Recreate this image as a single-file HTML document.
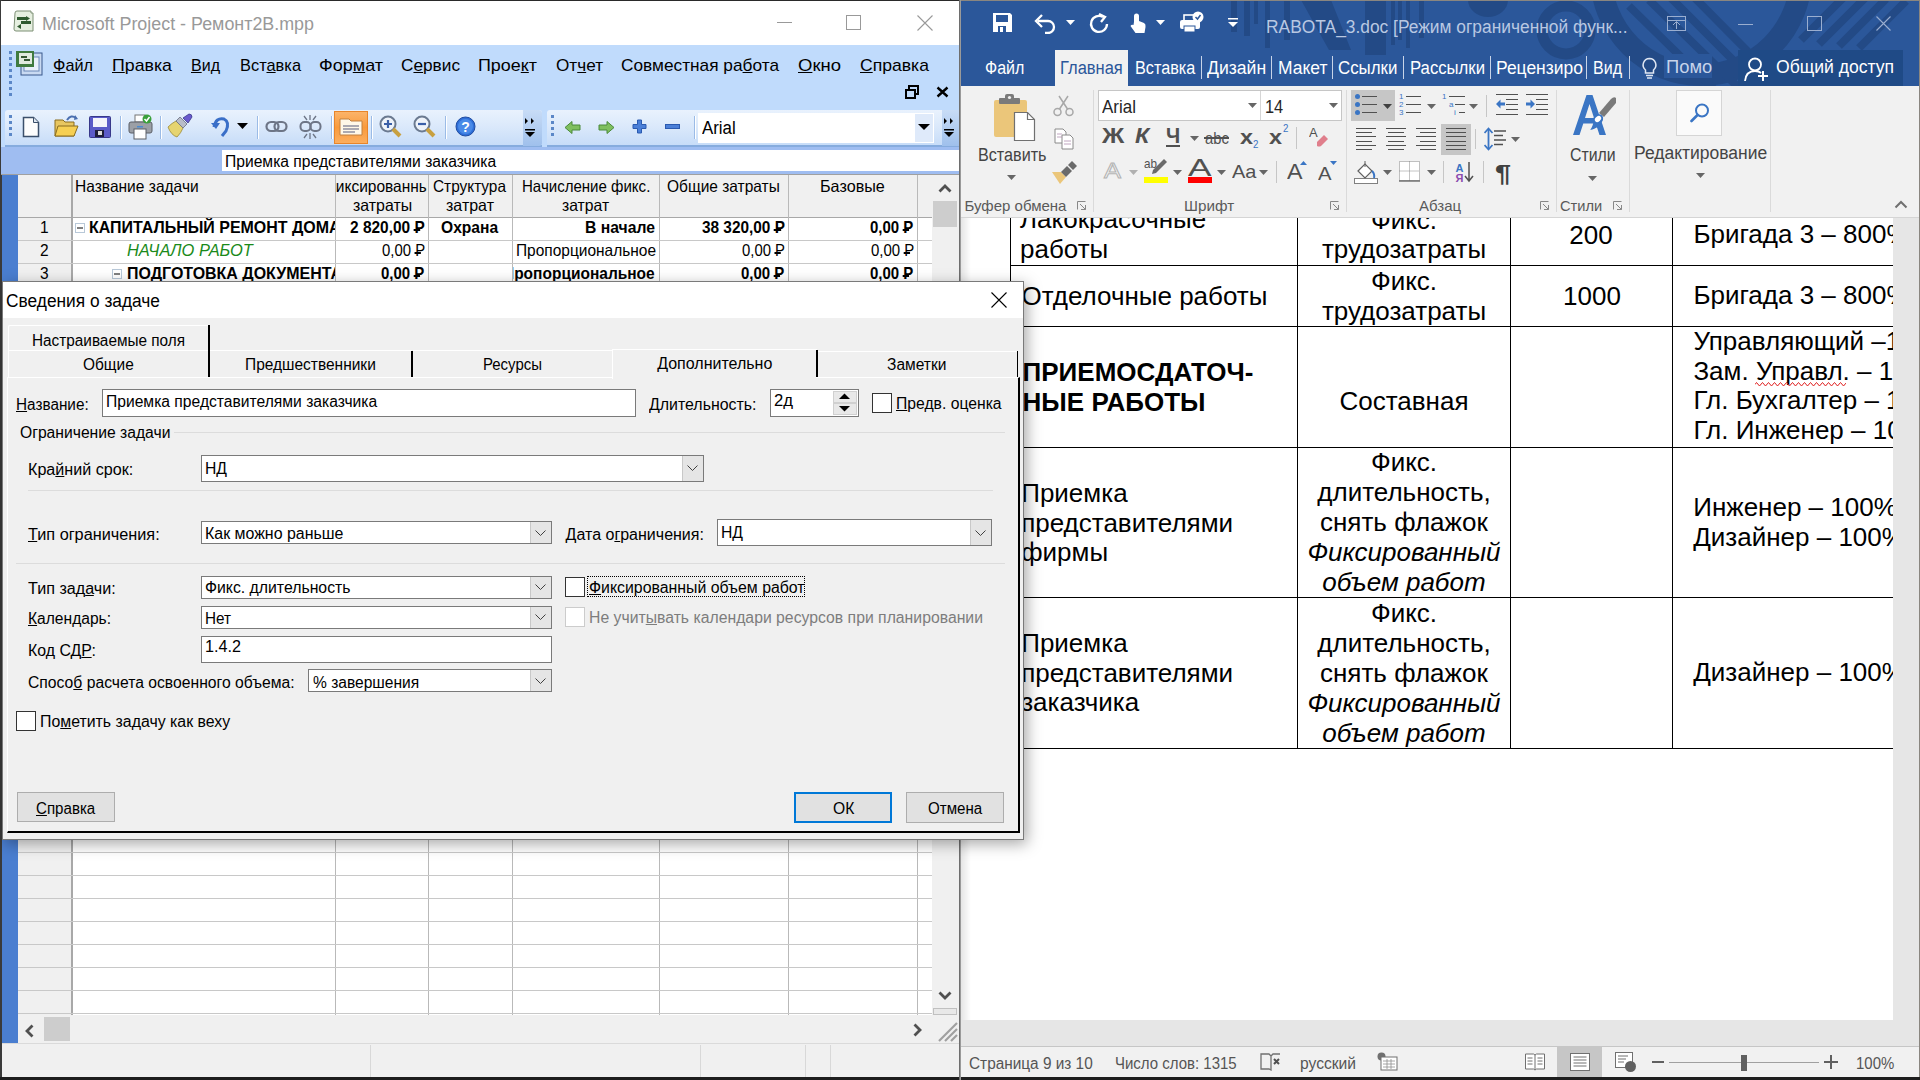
<!DOCTYPE html>
<html><head><meta charset="utf-8"><style>
html,body{margin:0;padding:0;width:1920px;height:1080px;overflow:hidden;background:#1e1e1e;}
body{position:relative;font-family:"Liberation Sans",sans-serif;}
.a{position:absolute;box-sizing:border-box;}
.t{position:absolute;white-space:nowrap;transform-origin:0 0;font-family:"Liberation Sans",sans-serif;}
u{text-decoration:underline;text-underline-offset:1px;text-decoration-thickness:1px;}
.rub{position:relative;display:inline-block;}
.rub::after{content:"";position:absolute;left:-0.06em;width:0.46em;top:0.63em;height:0.08em;background:currentColor;}
</style></head><body>
<div class="a" style="left:0px;top:0px;width:961px;height:1080px;background:#f0f0f0;"></div>
<div class="a" style="left:0px;top:0px;width:1920px;height:1px;background:#2a2a2a;"></div>
<div class="a" style="left:0px;top:0px;width:2px;height:1080px;background:#3a3a3a;"></div>
<div class="a" style="left:1px;top:1px;width:959px;height:44px;background:#fff;"></div>
<svg class="a" style="left:12px;top:9px;" width="24" height="24" viewBox="0 0 24 24"><path d="M3 4 Q3 2 5 2 L19 2 L19 4 L21 4 L21 22 L4 22 Q2 22 2 20 Z" fill="#e6efe0" stroke="#7d8f75" stroke-width="1"/><path d="M5 8 h9 v3 h-9z M9 12 h10 v3 h-10z" fill="#2f5a2f"/><path d="M14 7 l4 2.5 l-4 2.5z M9 15 l-4 2.5 l4 2.5z" fill="#2f5a2f"/></svg>
<div class="t" style="left:42.00px;top:14.76px;font-size:18px;line-height:18px;color:#999;transform:scaleX(0.9932);">Microsoft Project - Ремонт2В.mpp</div>
<div class="a" style="left:777px;top:22px;width:15px;height:1px;background:#999;"></div>
<div class="a" style="left:846px;top:15px;width:15px;height:15px;border:1px solid #999;"></div>
<svg class="a" style="left:917px;top:15px;" width="16" height="16" viewBox="0 0 16 16"><path d="M0.5 0.5 L15.5 15.5 M15.5 0.5 L0.5 15.5" stroke="#999" stroke-width="1.1"/></svg>
<div class="a" style="left:1px;top:45px;width:958px;height:102px;background:#c0dbfc;"></div>
<div class="a" style="left:9px;top:51px;width:3px;height:3px;background:#5b87c7;"></div>
<div class="a" style="left:9px;top:57px;width:3px;height:3px;background:#5b87c7;"></div>
<div class="a" style="left:9px;top:63px;width:3px;height:3px;background:#5b87c7;"></div>
<div class="a" style="left:9px;top:69px;width:3px;height:3px;background:#5b87c7;"></div>
<div class="a" style="left:9px;top:75px;width:3px;height:3px;background:#5b87c7;"></div>
<div class="a" style="left:9px;top:81px;width:3px;height:3px;background:#5b87c7;"></div>
<div class="a" style="left:9px;top:87px;width:3px;height:3px;background:#5b87c7;"></div>
<div class="a" style="left:9px;top:93px;width:3px;height:3px;background:#5b87c7;"></div>
<svg class="a" style="left:15px;top:49px;" width="29" height="29" viewBox="0 0 29 29"><rect x="6" y="4" width="21" height="22" fill="#c9daf2" stroke="#38588c"/><rect x="9" y="8" width="15" height="14" fill="#e8f0fb" stroke="#6a88b8"/><rect x="1" y="2" width="18" height="16" fill="#3f7a3f"/><rect x="4" y="4" width="13" height="11" fill="#dfe9df"/><path d="M6 7h6v2H6z M9 10h6v2H9z" fill="#335533"/></svg>
<div class="t" style="left:53.00px;top:56.61px;font-size:17px;line-height:17px;color:#000;transform:scaleX(0.9575);"><u>Ф</u>айл</div>
<div class="t" style="left:112.00px;top:56.61px;font-size:17px;line-height:17px;color:#000;transform:scaleX(1.0442);"><u>П</u>равка</div>
<div class="t" style="left:191.00px;top:56.61px;font-size:17px;line-height:17px;color:#000;transform:scaleX(0.9425);"><u>В</u>ид</div>
<div class="t" style="left:240.00px;top:56.61px;font-size:17px;line-height:17px;color:#000;transform:scaleX(0.9652);">Вст<u>а</u>вка</div>
<div class="t" style="left:319.00px;top:56.61px;font-size:17px;line-height:17px;color:#000;transform:scaleX(1.0597);">Фор<u>м</u>ат</div>
<div class="t" style="left:401.00px;top:56.61px;font-size:17px;line-height:17px;color:#000;transform:scaleX(1.0133);">С<u>е</u>рвис</div>
<div class="t" style="left:478.00px;top:56.61px;font-size:17px;line-height:17px;color:#000;transform:scaleX(1.0533);">Прое<u>к</u>т</div>
<div class="t" style="left:556.00px;top:56.61px;font-size:17px;line-height:17px;color:#000;transform:scaleX(1.0099);">От<u>ч</u>ет</div>
<div class="t" style="left:621.00px;top:56.61px;font-size:17px;line-height:17px;color:#000;transform:scaleX(1.0155);">Совместная ра<u>б</u>ота</div>
<div class="t" style="left:798.00px;top:56.61px;font-size:17px;line-height:17px;color:#000;transform:scaleX(1.0879);"><u>О</u>кно</div>
<div class="t" style="left:860.00px;top:56.61px;font-size:17px;line-height:17px;color:#000;transform:scaleX(1.0341);"><u>С</u>правка</div>
<svg class="a" style="left:905px;top:85px;" width="14" height="14" viewBox="0 0 14 14"><rect x="4" y="1" width="9" height="8" fill="none" stroke="#000" stroke-width="2"/><rect x="1" y="5" width="9" height="8" fill="#c2dbf9" stroke="#000" stroke-width="2"/></svg>
<svg class="a" style="left:936px;top:86px;" width="13" height="12" viewBox="0 0 13 12"><path d="M1.5 1.5 L11.5 10.5 M11.5 1.5 L1.5 10.5" stroke="#000" stroke-width="2.4"/></svg>
<div class="a" style="left:5px;top:110px;width:537px;height:36px;background:linear-gradient(#e9f2fd,#dbe9fb 45%,#c6dcf8);border-radius:3px;"></div>
<div class="a" style="left:5px;top:145px;width:537px;height:2px;background:#86acde;"></div>
<div class="a" style="left:523px;top:110px;width:19px;height:36px;background:linear-gradient(#c8dcf6,#9fc0ec);border-radius:0 3px 3px 0;"></div>
<div class="a" style="left:547px;top:110px;width:412px;height:36px;background:linear-gradient(#e9f2fd,#dbe9fb 45%,#c6dcf8);border-radius:3px;"></div>
<div class="a" style="left:547px;top:145px;width:412px;height:2px;background:#86acde;"></div>
<div class="a" style="left:942px;top:110px;width:17px;height:36px;background:linear-gradient(#c8dcf6,#9fc0ec);"></div>
<div class="a" style="left:9px;top:115px;width:3px;height:3px;background:#5b87c7;"></div>
<div class="a" style="left:551px;top:115px;width:3px;height:3px;background:#5b87c7;"></div>
<div class="a" style="left:9px;top:121px;width:3px;height:3px;background:#5b87c7;"></div>
<div class="a" style="left:551px;top:121px;width:3px;height:3px;background:#5b87c7;"></div>
<div class="a" style="left:9px;top:127px;width:3px;height:3px;background:#5b87c7;"></div>
<div class="a" style="left:551px;top:127px;width:3px;height:3px;background:#5b87c7;"></div>
<div class="a" style="left:9px;top:133px;width:3px;height:3px;background:#5b87c7;"></div>
<div class="a" style="left:551px;top:133px;width:3px;height:3px;background:#5b87c7;"></div>
<svg class="a" style="left:523px;top:116px;" width="16" height="26" viewBox="0 0 16 26"><path d="M2 2 l3 3 l-3 3z M8 2 l3 3 l-3 3z" fill="#000"/><rect x="2" y="13" width="10" height="1.5" fill="#000"/><path d="M2 16 h10 l-5 5z" fill="#000"/></svg>
<svg class="a" style="left:942px;top:116px;" width="16" height="26" viewBox="0 0 16 26"><path d="M2 2 l3 3 l-3 3z M8 2 l3 3 l-3 3z" fill="#000"/><rect x="2" y="13" width="10" height="1.5" fill="#000"/><path d="M2 16 h10 l-5 5z" fill="#000"/></svg>
<div class="a" style="left:120px;top:116px;width:1px;height:23px;background:#9bbbe6;"></div>
<div class="a" style="left:121px;top:116px;width:1px;height:23px;background:#fff;"></div>
<div class="a" style="left:160px;top:116px;width:1px;height:23px;background:#9bbbe6;"></div>
<div class="a" style="left:161px;top:116px;width:1px;height:23px;background:#fff;"></div>
<div class="a" style="left:257px;top:116px;width:1px;height:23px;background:#9bbbe6;"></div>
<div class="a" style="left:258px;top:116px;width:1px;height:23px;background:#fff;"></div>
<div class="a" style="left:331px;top:116px;width:1px;height:23px;background:#9bbbe6;"></div>
<div class="a" style="left:332px;top:116px;width:1px;height:23px;background:#fff;"></div>
<div class="a" style="left:371px;top:116px;width:1px;height:23px;background:#9bbbe6;"></div>
<div class="a" style="left:372px;top:116px;width:1px;height:23px;background:#fff;"></div>
<div class="a" style="left:445px;top:116px;width:1px;height:23px;background:#9bbbe6;"></div>
<div class="a" style="left:446px;top:116px;width:1px;height:23px;background:#fff;"></div>
<div class="a" style="left:694px;top:116px;width:1px;height:23px;background:#9bbbe6;"></div>
<div class="a" style="left:695px;top:116px;width:1px;height:23px;background:#fff;"></div>
<svg class="a" style="left:22px;top:116px;" width="18" height="22" viewBox="0 0 18 22"><path d="M1.5 1.5 h10 l5 5 v14 h-15z" fill="#fdfdfd" stroke="#3b4f6b" stroke-width="1.5"/><path d="M11.5 1.5 v5 h5" fill="#dde6f0" stroke="#3b4f6b" stroke-width="1"/></svg>
<svg class="a" style="left:54px;top:114px;" width="26" height="24" viewBox="0 0 26 24"><path d="M1 6 h8 l2 2 h9 v14 h-19z" fill="#e8c660" stroke="#8a6d1f"/><path d="M4 12 h20 l-4 10 h-19z" fill="#f6cf52" stroke="#8a6d1f"/><path d="M13 6 q4 -6 9 -2" fill="none" stroke="#4a6fb0" stroke-width="2"/><path d="M21 1 l3 4 l-4 1z" fill="#4a6fb0"/></svg>
<svg class="a" style="left:89px;top:116px;" width="22" height="22" viewBox="0 0 22 22"><rect x="0.5" y="0.5" width="21" height="21" rx="1" fill="#5b5bc8" stroke="#38388a"/><rect x="4" y="2" width="14" height="9" fill="#f4f4fb"/><rect x="6" y="14" width="9" height="7" fill="#1e1e3a"/><rect x="9" y="15" width="4" height="4" fill="#dcdcdc"/></svg>
<svg class="a" style="left:128px;top:114px;" width="25" height="26" viewBox="0 0 25 26"><rect x="7" y="1" width="10" height="7" fill="#fff" stroke="#777"/><rect x="1" y="8" width="23" height="11" rx="2" fill="#9b9fa6" stroke="#5b5f66"/><rect x="6" y="15" width="12" height="10" fill="#fff" stroke="#5b5f66"/><rect x="9" y="12" width="6" height="1.5" fill="#4a8ad0"/><circle cx="19" cy="5" r="4.5" fill="#3aa03a"/><path d="M16.5 5 l2 2 l3 -4" stroke="#fff" fill="none" stroke-width="1.5"/></svg>
<svg class="a" style="left:166px;top:113px;" width="28" height="26" viewBox="0 0 28 26"><path d="M2 14 q4 -4 8 -6 l7 7 q-2 5 -6 9 q-6 -2 -9 -10z" fill="#e6d470" stroke="#9a8a3a" stroke-width="0.8"/><path d="M10 8 l4 -4 l7 7 l-4 4z" fill="#b8bcc8" stroke="#6a6f80" stroke-width="0.8"/><path d="M17 5 l6 -4 q3 0 3 3 l-4 6z" fill="#6a5acd" stroke="#3a3a8a" stroke-width="0.8"/></svg>
<svg class="a" style="left:210px;top:115px;" width="22" height="22" viewBox="0 0 22 22"><path d="M4 12 q2 -10 10 -8 q6 3 2 12 l-4 5" fill="none" stroke="#3a6fc8" stroke-width="3"/><path d="M1 8 l5 6 l4 -6z" fill="#3a6fc8"/></svg>
<svg class="a" style="left:237px;top:123px;" width="11" height="7" viewBox="0 0 11 7"><path d="M0 0 h11 l-5.5 6z" fill="#000"/></svg>
<svg class="a" style="left:265px;top:120px;" width="23" height="13" viewBox="0 0 23 13"><rect x="1.5" y="2" width="12" height="9" rx="4.5" fill="none" stroke="#6d7586" stroke-width="2.2"/><rect x="9.5" y="2" width="12" height="9" rx="4.5" fill="none" stroke="#6d7586" stroke-width="2.2"/></svg>
<svg class="a" style="left:299px;top:115px;" width="23" height="24" viewBox="0 0 23 24"><rect x="1.5" y="7" width="10" height="9" rx="4" fill="none" stroke="#6d7586" stroke-width="2"/><rect x="11.5" y="7" width="10" height="9" rx="4" fill="none" stroke="#6d7586" stroke-width="2"/><path d="M11 0 v5 M11 18 v6 M5 1 l3 4 M17 1 l-3 4 M5 23 l3 -4 M17 23 l-3 -4" stroke="#6d7586" stroke-width="1.3"/></svg>
<div class="a" style="left:334px;top:111px;width:34px;height:33px;background:linear-gradient(#fbb46a,#f99a3c 50%,#fcae5e);border:1px solid #e8852a;"></div>
<svg class="a" style="left:339px;top:116px;" width="24" height="20" viewBox="0 0 24 20"><path d="M1 3 h9 l2 2 h11 v14 h-22z" fill="#fff8e8" stroke="#c08040"/><path d="M4 10 h16 M4 13 h16 M4 16 h12" stroke="#9090a0" stroke-width="1.3"/></svg>
<svg class="a" style="left:379px;top:115px;" width="23" height="23" viewBox="0 0 23 23"><circle cx="9" cy="9" r="7.5" fill="#eef3fa" stroke="#6b7a90" stroke-width="2"/><path d="M14 14 l7 7" stroke="#c8a040" stroke-width="4"/><path d="M5 9 h8 M9 5 v8" stroke="#3a5fa8" stroke-width="2.2"/></svg>
<svg class="a" style="left:413px;top:115px;" width="23" height="23" viewBox="0 0 23 23"><circle cx="9" cy="9" r="7.5" fill="#eef3fa" stroke="#6b7a90" stroke-width="2"/><path d="M14 14 l7 7" stroke="#c8a040" stroke-width="4"/><path d="M5 9 h8" stroke="#3a5fa8" stroke-width="2.2"/></svg>
<svg class="a" style="left:455px;top:116px;" width="21" height="21" viewBox="0 0 21 21"><circle cx="10.5" cy="10.5" r="9.5" fill="#2f6fd8" stroke="#1d4aa0"/><circle cx="10.5" cy="10.5" r="7.5" fill="#4a8ae8"/><text x="10.5" y="15.5" font-size="14" font-weight="bold" text-anchor="middle" fill="#fff" font-family="Liberation Sans">?</text></svg>
<svg class="a" style="left:564px;top:121px;" width="17" height="13" viewBox="0 0 17 13"><path d="M1 6.5 l7 -6 v3.5 h8 v5 h-8 v3.5z" fill="#7fbf5f" stroke="#4a8a3a"/></svg>
<svg class="a" style="left:598px;top:121px;" width="17" height="13" viewBox="0 0 17 13"><path d="M16 6.5 l-7 -6 v3.5 h-8 v5 h8 v3.5z" fill="#7fbf5f" stroke="#4a8a3a"/></svg>
<svg class="a" style="left:632px;top:119px;" width="15" height="15" viewBox="0 0 15 15"><path d="M5.5 1 h4 v4.5 h4.5 v4 h-4.5 v4.5 h-4 v-4.5 h-4.5 v-4 h4.5z" fill="#4a7fd8" stroke="#2a5ab0"/></svg>
<svg class="a" style="left:665px;top:124px;" width="15" height="5" viewBox="0 0 15 5"><rect x="0.5" y="0.5" width="14" height="4" fill="#4a7fd8" stroke="#2a5ab0"/></svg>
<div class="a" style="left:698px;top:113px;width:236px;height:30px;background:#fff;"></div>
<div class="a" style="left:915px;top:114px;width:18px;height:28px;background:#dfeafa;"></div>
<svg class="a" style="left:918px;top:124px;" width="12" height="7" viewBox="0 0 12 7"><path d="M0 0 h12 l-6 6z" fill="#000"/></svg>
<div class="t" style="left:702.00px;top:118.76px;font-size:18px;line-height:18px;color:#000;transform:scaleX(0.9361);">Arial</div>
<div class="a" style="left:1px;top:147px;width:958px;height:28px;background:#9fbdf1;"></div>
<div class="a" style="left:222px;top:150px;width:737px;height:21px;background:#fff;"></div>
<div class="t" style="left:224.70px;top:153.75px;font-size:16px;line-height:16px;color:#000;transform:scaleX(0.9775);">Приемка представителями заказчика</div>
<div class="a" style="left:1px;top:174px;width:958px;height:1px;background:#a0a0a0;"></div>
<div class="a" style="left:2px;top:175px;width:16px;height:868px;background:#4a7ed0;"></div>
<div class="a" style="left:18px;top:175px;width:941px;height:42px;background:#f0f0f0;"></div>
<div class="a" style="left:18px;top:217px;width:914px;height:1px;background:#a8a8a8;"></div>
<div class="a" style="left:72px;top:218px;width:860px;height:797px;background:#fff;"></div>
<div class="a" style="left:18px;top:218px;width:54px;height:797px;background:#f0f0f0;"></div>
<div class="a" style="left:71px;top:175px;width:2px;height:840px;background:#a8a8a8;"></div>
<div class="a" style="left:335px;top:175px;width:1px;height:840px;background:#b9b9b9;"></div>
<div class="a" style="left:428px;top:175px;width:1px;height:840px;background:#b9b9b9;"></div>
<div class="a" style="left:512px;top:175px;width:1px;height:840px;background:#b9b9b9;"></div>
<div class="a" style="left:659px;top:175px;width:1px;height:840px;background:#b9b9b9;"></div>
<div class="a" style="left:788px;top:175px;width:1px;height:840px;background:#b9b9b9;"></div>
<div class="a" style="left:917px;top:175px;width:1px;height:840px;background:#b9b9b9;"></div>
<div class="a" style="left:18px;top:240px;width:914px;height:1px;background:#c8c8c8;"></div>
<div class="a" style="left:18px;top:263px;width:914px;height:1px;background:#c8c8c8;"></div>
<div class="a" style="left:18px;top:852px;width:914px;height:1px;background:#c8c8c8;"></div>
<div class="a" style="left:18px;top:875px;width:914px;height:1px;background:#c8c8c8;"></div>
<div class="a" style="left:18px;top:898px;width:914px;height:1px;background:#c8c8c8;"></div>
<div class="a" style="left:18px;top:921px;width:914px;height:1px;background:#c8c8c8;"></div>
<div class="a" style="left:18px;top:944px;width:914px;height:1px;background:#c8c8c8;"></div>
<div class="a" style="left:18px;top:967px;width:914px;height:1px;background:#c8c8c8;"></div>
<div class="a" style="left:18px;top:990px;width:914px;height:1px;background:#c8c8c8;"></div>
<div class="a" style="left:18px;top:1013px;width:914px;height:1px;background:#c8c8c8;"></div>
<div class="t" style="left:74.50px;top:178.03px;font-size:16.5px;line-height:16.5px;transform:scaleX(0.9418);">Название задачи</div>
<div class="a" style="left:0;top:0;width:1920px;height:1080px;clip-path:inset(175px 1493px 863px 336px);">
<div class="t" style="left:324.49px;top:178.03px;font-size:16.5px;line-height:16.5px;transform:scaleX(0.9394);">Фиксированные</div>
</div>
<div class="t" style="left:352.50px;top:197.03px;font-size:16.5px;line-height:16.5px;transform:scaleX(0.9651);">затраты</div>
<div class="t" style="left:433.30px;top:178.03px;font-size:16.5px;line-height:16.5px;transform:scaleX(0.9324);">Структура</div>
<div class="t" style="left:446.30px;top:197.03px;font-size:16.5px;line-height:16.5px;transform:scaleX(0.9697);">затрат</div>
<div class="t" style="left:521.50px;top:178.03px;font-size:16.5px;line-height:16.5px;transform:scaleX(0.9118);">Начисление фикс.</div>
<div class="t" style="left:562.40px;top:197.03px;font-size:16.5px;line-height:16.5px;transform:scaleX(0.9535);">затрат</div>
<div class="t" style="left:667.20px;top:178.03px;font-size:16.5px;line-height:16.5px;transform:scaleX(0.9384);">Общие затраты</div>
<div class="t" style="left:820.20px;top:178.03px;font-size:16.5px;line-height:16.5px;transform:scaleX(0.9794);">Базовые</div>
<div class="t" style="left:40.30px;top:219.03px;font-size:16.5px;line-height:16.5px;transform:scaleX(0.9394);">1</div>
<div class="t" style="left:40.30px;top:242.03px;font-size:16.5px;line-height:16.5px;transform:scaleX(0.9394);">2</div>
<div class="t" style="left:40.30px;top:265.03px;font-size:16.5px;line-height:16.5px;transform:scaleX(0.9394);">3</div>
<svg class="a" style="left:75px;top:223px;" width="10" height="10" viewBox="0 0 10 10"><rect x="0.5" y="0.5" width="9" height="9" fill="#fff" stroke="#b8c8d8"/><path d="M2 5 h6" stroke="#000" stroke-width="1"/></svg>
<svg class="a" style="left:112px;top:269px;" width="10" height="10" viewBox="0 0 10 10"><rect x="0.5" y="0.5" width="9" height="9" fill="#fff" stroke="#b8c8d8"/><path d="M2 5 h6" stroke="#000" stroke-width="1"/></svg>
<div class="a" style="left:0;top:0;width:1920px;height:1080px;clip-path:inset(218px 1585px 792px 72px);">
<div class="t" style="left:89.40px;top:219.03px;font-size:16.5px;line-height:16.5px;font-weight:bold;transform:scaleX(0.9676);">КАПИТАЛЬНЫЙ РЕМОНТ ДОМА</div>
<div class="t" style="left:126.50px;top:242.03px;font-size:16.5px;line-height:16.5px;color:#1a8a1a;font-style:italic;transform:scaleX(0.9953);">НАЧАЛО РАБОТ</div>
<div class="t" style="left:126.90px;top:265.03px;font-size:16.5px;line-height:16.5px;font-weight:bold;transform:scaleX(0.9676);">ПОДГОТОВКА ДОКУМЕНТАЦИИ</div>
</div>
<div class="t" style="left:350.00px;top:219.03px;font-size:16.5px;line-height:16.5px;font-weight:bold;transform:scaleX(0.9359);">2 820,00 <span class="rub">Р</span></div>
<div class="t" style="left:440.80px;top:219.03px;font-size:16.5px;line-height:16.5px;font-weight:bold;transform:scaleX(0.9452);">Охрана</div>
<div class="t" style="left:585.00px;top:219.03px;font-size:16.5px;line-height:16.5px;font-weight:bold;transform:scaleX(0.9534);">В начале</div>
<div class="t" style="left:701.70px;top:219.03px;font-size:16.5px;line-height:16.5px;font-weight:bold;transform:scaleX(0.9313);">38 320,00 <span class="rub">Р</span></div>
<div class="t" style="left:870.20px;top:219.03px;font-size:16.5px;line-height:16.5px;font-weight:bold;transform:scaleX(0.9080);">0,00 <span class="rub">Р</span></div>
<div class="t" style="left:382.30px;top:242.03px;font-size:16.5px;line-height:16.5px;transform:scaleX(0.9038);">0,00 <span class="rub">Р</span></div>
<div class="t" style="left:516.30px;top:242.03px;font-size:16.5px;line-height:16.5px;transform:scaleX(0.9376);">Пропорциональное</div>
<div class="t" style="left:742.40px;top:242.03px;font-size:16.5px;line-height:16.5px;transform:scaleX(0.9018);">0,00 <span class="rub">Р</span></div>
<div class="t" style="left:871.00px;top:242.03px;font-size:16.5px;line-height:16.5px;transform:scaleX(0.9080);">0,00 <span class="rub">Р</span></div>
<div class="t" style="left:381.40px;top:265.03px;font-size:16.5px;line-height:16.5px;font-weight:bold;transform:scaleX(0.9080);">0,00 <span class="rub">Р</span></div>
<div class="a" style="left:0;top:0;width:1920px;height:1080px;clip-path:inset(263px 1261px 792px 513px);">
<div class="t" style="left:503.29px;top:265.03px;font-size:16.5px;line-height:16.5px;font-weight:bold;transform:scaleX(0.9394);">Пропорциональное</div>
</div>
<div class="t" style="left:741.30px;top:265.03px;font-size:16.5px;line-height:16.5px;font-weight:bold;transform:scaleX(0.9080);">0,00 <span class="rub">Р</span></div>
<div class="t" style="left:870.20px;top:265.03px;font-size:16.5px;line-height:16.5px;font-weight:bold;transform:scaleX(0.9080);">0,00 <span class="rub">Р</span></div>
<div class="a" style="left:932px;top:175px;width:27px;height:840px;background:#f0f0f0;"></div>
<div class="a" style="left:933px;top:201px;width:24px;height:26px;background:#cdcdcd;"></div>
<svg class="a" style="left:938px;top:184px;" width="14" height="9" viewBox="0 0 14 9"><path d="M1.5 7.5 L7 2 L12.5 7.5" fill="none" stroke="#505050" stroke-width="2.8"/></svg>
<svg class="a" style="left:938px;top:991px;" width="14" height="9" viewBox="0 0 14 9"><path d="M1.5 1.5 L7 7 L12.5 1.5" fill="none" stroke="#505050" stroke-width="2.8"/></svg>
<div class="a" style="left:933px;top:1008px;width:24px;height:7px;background:#e8e8e8;border:1px solid #c0c0c0;"></div>
<div class="a" style="left:18px;top:1015px;width:941px;height:28px;background:#f0f0f0;"></div>
<div class="a" style="left:44px;top:1017px;width:26px;height:24px;background:#cdcdcd;"></div>
<svg class="a" style="left:25px;top:1024px;" width="9" height="14" viewBox="0 0 9 14"><path d="M7.5 1.5 L2 7 L7.5 12.5" fill="none" stroke="#505050" stroke-width="2.8"/></svg>
<svg class="a" style="left:913px;top:1023px;" width="9" height="14" viewBox="0 0 9 14"><path d="M1.5 1.5 L7 7 L1.5 12.5" fill="none" stroke="#505050" stroke-width="2.8"/></svg>
<svg class="a" style="left:938px;top:1022px;" width="20" height="20" viewBox="0 0 20 20"><path d="M19 1 L1 19 M19 7 L7 19 M19 13 L13 19" stroke="#a0a0a0" stroke-width="2.2"/></svg>
<div class="a" style="left:955px;top:1066px;width:2px;height:2px;background:#b8b8b8;"></div>
<div class="a" style="left:951px;top:1070px;width:2px;height:2px;background:#b8b8b8;"></div>
<div class="a" style="left:955px;top:1070px;width:2px;height:2px;background:#b8b8b8;"></div>
<div class="a" style="left:947px;top:1074px;width:2px;height:2px;background:#b8b8b8;"></div>
<div class="a" style="left:951px;top:1074px;width:2px;height:2px;background:#b8b8b8;"></div>
<div class="a" style="left:955px;top:1074px;width:2px;height:2px;background:#b8b8b8;"></div>
<div class="a" style="left:2px;top:1043px;width:957px;height:35px;background:#f0f0f0;border-top:1px solid #dadada;"></div>
<div class="a" style="left:370px;top:1045px;width:1px;height:32px;background:#d8d8d8;"></div>
<div class="a" style="left:700px;top:1045px;width:1px;height:32px;background:#d8d8d8;"></div>
<div class="a" style="left:805px;top:1045px;width:1px;height:32px;background:#d8d8d8;"></div>
<div class="a" style="left:830px;top:1045px;width:1px;height:32px;background:#d8d8d8;"></div>
<div class="a" style="left:0px;top:1077px;width:961px;height:3px;background:#1e1e1e;"></div>
<div class="a" style="left:959px;top:0px;width:2px;height:1080px;background:#6e6e6e;"></div>
<div class="a" style="left:960px;top:0px;width:960px;height:86px;background:#2b579a;"></div>
<div class="a" style="left:960px;top:0px;width:1px;height:1080px;background:#9a9a9a;"></div>
<svg class="a" style="left:961px;top:0px;" width="957" height="86" viewBox="0 0 957 86">
      <g fill="#234a86">
        <rect x="270" y="0" width="6" height="32"/><rect x="283" y="0" width="6" height="36"/><rect x="293" y="0" width="4" height="24"/>
        <rect x="304" y="0" width="5" height="48"/><rect x="323" y="0" width="6" height="40"/>
        <path d="M340 0 h30 l20 50 h-22z"/>
        <rect x="404" y="0" width="21" height="55"/><rect x="430" y="0" width="4" height="45"/><rect x="437" y="0" width="4" height="40"/><rect x="445" y="0" width="4" height="48"/><rect x="458" y="0" width="5" height="38"/>
        <path d="M507 0 h40 a20 17 0 0 1 -40 0z"/>
      </g>
      <circle cx="605" cy="30" r="24" fill="none" stroke="#234a86" stroke-width="11"/>
      <circle cx="740" cy="-25" r="100" fill="none" stroke="#234a86" stroke-width="22"/>
      <g stroke="#234a86" stroke-width="8">
        <path d="M668 6 L760 96 M688 0 L782 92 M706 -6 L800 88 M724 -12 L815 80"/>
        <path d="M840 40 L885 -5 M858 44 L905 -3 M878 46 L925 -1 M898 48 L945 1"/>
      </g>
    </svg>
<svg class="a" style="left:992px;top:12px;" width="21" height="21" viewBox="0 0 21 21"><path d="M1 1 h17 l2 2 v17 h-19z" fill="#fff"/><rect x="4" y="3" width="12" height="7" fill="#2b579a"/><rect x="6" y="14" width="8" height="6" fill="#2b579a"/><rect x="8" y="15" width="3" height="5" fill="#fff"/></svg>
<svg class="a" style="left:1034px;top:13px;" width="24" height="21" viewBox="0 0 24 21"><path d="M4 8 h10 a6 6 0 0 1 0 12 h-3" fill="none" stroke="#fff" stroke-width="2.3"/><path d="M8 2 l-6 6 l6 6" fill="none" stroke="#fff" stroke-width="2.3"/></svg>
<svg class="a" style="left:1066px;top:20px;" width="9" height="5" viewBox="0 0 9 5"><path d="M0 0 h9 l-4.5 5z" fill="#fff"/></svg>
<svg class="a" style="left:1088px;top:13px;" width="22" height="21" viewBox="0 0 22 21"><path d="M15 4 a8 8 0 1 0 4 7" fill="none" stroke="#fff" stroke-width="2.3"/><path d="M11 1 l6 3 l-4 5" fill="none" stroke="#fff" stroke-width="2.3"/></svg>
<svg class="a" style="left:1128px;top:12px;" width="19" height="22" viewBox="0 0 19 22"><path d="M6 10 v-6 a2.5 2.5 0 0 1 5 0 v5 l5 2 q2 1 1.5 4 l-1 6 h-9 l-5 -7 q1 -2 3 -1z" fill="#fff"/></svg>
<svg class="a" style="left:1156px;top:20px;" width="9" height="5" viewBox="0 0 9 5"><path d="M0 0 h9 l-4.5 5z" fill="#fff"/></svg>
<svg class="a" style="left:1179px;top:11px;" width="25" height="22" viewBox="0 0 25 22"><rect x="5" y="4" width="11" height="6" fill="none" stroke="#fff" stroke-width="1.6"/><rect x="1" y="9" width="20" height="9" rx="2" fill="#fff"/><rect x="5" y="15" width="11" height="6" fill="#fff" stroke="#2b579a"/><circle cx="19" cy="6" r="5.5" fill="#fff"/><path d="M16.5 6 l2 2 l3 -4" stroke="#2b579a" fill="none" stroke-width="1.5"/></svg>
<svg class="a" style="left:1228px;top:18px;" width="10" height="9" viewBox="0 0 10 9"><rect x="0" y="0" width="10" height="1.5" fill="#fff"/><path d="M0 4 h10 l-5 5z" fill="#fff"/></svg>
<div class="t" style="left:1266.00px;top:17.56px;font-size:18px;line-height:18px;color:#b9c8e2;transform:scaleX(0.9651);">RABOTA_3.doc [Режим ограниченной функ...</div>
<svg class="a" style="left:1667px;top:16px;" width="19" height="15" viewBox="0 0 19 15"><rect x="0.5" y="0.5" width="18" height="14" fill="none" stroke="#9aaed0"/><path d="M0.5 4.5 h18" stroke="#9aaed0"/><path d="M9.5 13 v-7 M6 9 l3.5 -3.5 l3.5 3.5" fill="none" stroke="#9aaed0"/></svg>
<div class="a" style="left:1738px;top:24px;width:15px;height:1px;background:#9aaed0;"></div>
<div class="a" style="left:1807px;top:16px;width:15px;height:15px;border:1px solid #9aaed0;"></div>
<svg class="a" style="left:1876px;top:16px;" width="15" height="15" viewBox="0 0 15 15"><path d="M0.5 0.5 L14.5 14.5 M14.5 0.5 L0.5 14.5" stroke="#9aaed0" stroke-width="1.1"/></svg>
<div class="a" style="left:1055px;top:50px;width:73px;height:36px;background:#f1f1f1;"></div>
<div class="t" style="left:984.70px;top:58.96px;font-size:18px;line-height:18px;color:#fff;transform:scaleX(0.8884);">Файл</div>
<div class="t" style="left:1059.70px;top:58.96px;font-size:18px;line-height:18px;color:#2b579a;transform:scaleX(0.9163);">Главная</div>
<div class="t" style="left:1134.70px;top:58.96px;font-size:18px;line-height:18px;color:#fff;transform:scaleX(0.9011);">Вставка</div>
<div class="t" style="left:1206.70px;top:58.96px;font-size:18px;line-height:18px;color:#fff;transform:scaleX(0.9765);">Дизайн</div>
<div class="t" style="left:1277.50px;top:58.96px;font-size:18px;line-height:18px;color:#fff;transform:scaleX(0.9698);">Макет</div>
<div class="t" style="left:1337.80px;top:58.96px;font-size:18px;line-height:18px;color:#fff;transform:scaleX(0.9375);">Ссылки</div>
<div class="t" style="left:1409.70px;top:58.96px;font-size:18px;line-height:18px;color:#fff;transform:scaleX(0.9285);">Рассылки</div>
<div class="t" style="left:1495.60px;top:58.96px;font-size:18px;line-height:18px;color:#fff;transform:scaleX(0.9699);">Рецензиро</div>
<div class="t" style="left:1593.00px;top:58.96px;font-size:18px;line-height:18px;color:#fff;transform:scaleX(0.8901);">Вид</div>
<div class="a" style="left:1201px;top:56px;width:1px;height:23px;background:#c8d4e8;"></div>
<div class="a" style="left:1271px;top:56px;width:1px;height:23px;background:#c8d4e8;"></div>
<div class="a" style="left:1332px;top:56px;width:1px;height:23px;background:#c8d4e8;"></div>
<div class="a" style="left:1403px;top:56px;width:1px;height:23px;background:#c8d4e8;"></div>
<div class="a" style="left:1490px;top:56px;width:1px;height:23px;background:#c8d4e8;"></div>
<div class="a" style="left:1586px;top:56px;width:1px;height:23px;background:#c8d4e8;"></div>
<div class="a" style="left:1629px;top:56px;width:1px;height:23px;background:#c8d4e8;"></div>
<div class="a" style="left:1664px;top:54px;width:48px;height:24px;background:#2b579a;"></div>
<svg class="a" style="left:1641px;top:57px;" width="17" height="22" viewBox="0 0 17 22"><path d="M8.5 1.5 a6.5 6.5 0 0 1 4 11.5 v3 h-8 v-3 a6.5 6.5 0 0 1 4 -11.5z" fill="none" stroke="#dfe6f2" stroke-width="1.5"/><path d="M5 18.5 h7 M6 21 h5" stroke="#dfe6f2" stroke-width="1.5"/></svg>
<div class="t" style="left:1665.80px;top:58.06px;font-size:18px;line-height:18px;color:#c6d3ea;transform:scaleX(1.0195);">Помо</div>
<div class="a" style="left:1738px;top:50px;width:165px;height:36px;background:#1f4a86;"></div>
<svg class="a" style="left:1744px;top:57px;" width="26" height="25" viewBox="0 0 26 25"><circle cx="11" cy="7.5" r="6" fill="none" stroke="#fff" stroke-width="1.8"/><path d="M1 24 q1 -10 10 -10 q4 0 6 2" fill="none" stroke="#fff" stroke-width="1.8"/><path d="M19 14 v10 M14 19 h10" stroke="#fff" stroke-width="2"/></svg>
<div class="t" style="left:1776.40px;top:58.06px;font-size:18px;line-height:18px;color:#fff;transform:scaleX(0.9764);">Общий доступ</div>
<div class="a" style="left:961px;top:86px;width:959px;height:131px;background:#f1f1f1;"></div>
<div class="a" style="left:961px;top:217px;width:959px;height:1px;background:#d5d5d5;"></div>
<div class="a" style="left:1093px;top:90px;width:1px;height:122px;background:#dadada;"></div>
<div class="a" style="left:1346px;top:90px;width:1px;height:122px;background:#dadada;"></div>
<div class="a" style="left:1556px;top:90px;width:1px;height:122px;background:#dadada;"></div>
<div class="a" style="left:1629px;top:90px;width:1px;height:122px;background:#dadada;"></div>
<div class="a" style="left:1770px;top:90px;width:1px;height:122px;background:#dadada;"></div>
<svg class="a" style="left:993px;top:94px;" width="44" height="48" viewBox="0 0 44 48"><rect x="1" y="6" width="33" height="37" rx="2" fill="#ebc67a"/><rect x="6" y="4" width="21" height="6" rx="1" fill="#7a7a7a"/><path d="M12 4 v-2 a2 2 0 0 1 2 -2 h5 a2 2 0 0 1 2 2 v2z" fill="#7a7a7a"/><circle cx="16.5" cy="3.5" r="1.6" fill="#f1f1f1"/><path d="M21.5 18.5 h13 l7 7 v21 h-20z" fill="#fff" stroke="#707070" stroke-width="1.2"/><path d="M34.5 18.5 v7 h7" fill="none" stroke="#707070" stroke-width="1.2"/></svg>
<div class="t" style="left:977.50px;top:145.76px;font-size:18px;line-height:18px;color:#444;transform:scaleX(0.8975);">Вставить</div>
<svg class="a" style="left:1007px;top:175px;" width="9" height="5" viewBox="0 0 9 5"><path d="M0 0 h9 l-4.5 5z" fill="#666"/></svg>
<svg class="a" style="left:1053px;top:95px;" width="21" height="22" viewBox="0 0 21 22"><circle cx="4.5" cy="17" r="3.5" fill="none" stroke="#a8a8a8" stroke-width="1.5"/><circle cx="16.5" cy="17" r="3.5" fill="none" stroke="#a8a8a8" stroke-width="1.5"/><path d="M6.5 14 L15 1 M14.5 14 L6 1" stroke="#a8a8a8" stroke-width="1.5"/></svg>
<svg class="a" style="left:1054px;top:128px;" width="21" height="22" viewBox="0 0 21 22"><path d="M1 1 h8 l3 3 v11 h-11z" fill="#fff" stroke="#8a8a8a"/><path d="M8 7 h8 l3 3 v11 h-11z" fill="#fff" stroke="#8a8a8a"/><path d="M3 6h5 M3 9h5 M10 13h7 M10 16h7" stroke="#b090b0" stroke-width="0.8"/></svg>
<svg class="a" style="left:1051px;top:161px;" width="26" height="24" viewBox="0 0 26 24"><path d="M1 11 h9 l5 5 l-6 7z" fill="#ebc67a"/><path d="M10 11 l6 -6 l5 5 l-6 6z" fill="#6a6a6a"/><path d="M17 4 l4 -4 l5 5 l-4 4z" fill="#6a6a6a"/></svg>
<div class="t" style="left:964.50px;top:198.30px;font-size:15px;line-height:15px;color:#5a5a5a;">Буфер обмена</div>
<svg class="a" style="left:1077px;top:201px;" width="10" height="10" viewBox="0 0 10 10"><path d="M0.5 0.5 h8 M0.5 0.5 v8" stroke="#888" fill="none"/><path d="M3 3 l5.5 5.5 M8.5 4 v4.5 h-4.5" stroke="#888" fill="none"/></svg>
<div class="a" style="left:1098px;top:90px;width:244px;height:31px;background:#fff;border:1px solid #c6c6c6;"></div>
<div class="a" style="left:1260px;top:91px;width:1px;height:29px;background:#d6d6d6;"></div>
<div class="t" style="left:1101.50px;top:96.71px;font-size:19px;line-height:19px;color:#262626;transform:scaleX(0.8921);">Arial</div>
<div class="t" style="left:1265.40px;top:96.71px;font-size:19px;line-height:19px;color:#262626;transform:scaleX(0.8610);">14</div>
<svg class="a" style="left:1248px;top:103px;" width="9" height="5" viewBox="0 0 9 5"><path d="M0 0 h9 l-4.5 5z" fill="#666"/></svg>
<svg class="a" style="left:1329px;top:103px;" width="9" height="5" viewBox="0 0 9 5"><path d="M0 0 h9 l-4.5 5z" fill="#666"/></svg>
<div class="t" style="left:1101.62px;top:125.27px;font-size:22px;line-height:22px;color:#505050;font-weight:bold;transform:scaleX(1.1177);">Ж</div>
<div class="t" style="left:1134.70px;top:125.27px;font-size:22px;line-height:22px;color:#505050;font-weight:bold;font-style:italic;transform:scaleX(1.0544);">К</div>
<div class="t" style="left:1165.80px;top:125.27px;font-size:22px;line-height:22px;color:#505050;font-weight:bold;transform:scaleX(0.9188);">Ч</div>
<div class="a" style="left:1166px;top:145px;width:14px;height:2px;background:#505050;"></div>
<svg class="a" style="left:1190px;top:136px;" width="9" height="5" viewBox="0 0 9 5"><path d="M0 0 h9 l-4.5 5z" fill="#666"/></svg>
<div class="t" style="left:1205.00px;top:129.51px;font-size:17px;line-height:17px;color:#505050;transform:scaleX(0.8682);">abc</div>
<div class="a" style="left:1204px;top:137px;width:25px;height:1.5px;background:#505050;"></div>
<div class="t" style="left:1239.60px;top:126.97px;font-size:20px;line-height:20px;color:#505050;font-weight:bold;transform:scaleX(1.1712);">x</div>
<div class="t" style="left:1252.50px;top:140.03px;font-size:10px;line-height:10px;color:#3a75c4;transform:scaleX(0.9730);">2</div>
<div class="t" style="left:1269.40px;top:126.97px;font-size:20px;line-height:20px;color:#505050;font-weight:bold;transform:scaleX(1.1712);">x</div>
<div class="t" style="left:1282.50px;top:123.53px;font-size:10px;line-height:10px;color:#3a75c4;transform:scaleX(0.9730);">2</div>
<div class="a" style="left:1296px;top:127px;width:1px;height:22px;background:#c6c6c6;"></div>
<svg class="a" style="left:1309px;top:126px;" width="20" height="22" viewBox="0 0 20 22"><text x="0" y="11" font-size="13" fill="#505050" font-family="Liberation Sans">A</text><path d="M8 16 l7 -7 l4 4 l-7 7 q-2 1 -4 0z" fill="#e07f8c"/></svg>
<div class="t" style="left:1104.20px;top:159.77px;font-size:22px;line-height:22px;color:#f6f6f6;transform:scaleX(1.1576);-webkit-text-stroke:1px #b4b4b4;">A</div>
<svg class="a" style="left:1129px;top:170px;" width="9" height="5" viewBox="0 0 9 5"><path d="M0 0 h9 l-4.5 5z" fill="#b0b0b0"/></svg>
<div class="t" style="left:1144.20px;top:156.99px;font-size:13px;line-height:13px;color:#505050;transform:scaleX(0.8989);">ab</div>
<svg class="a" style="left:1150px;top:158px;" width="18" height="18" viewBox="0 0 18 18"><path d="M2 16 l4 -1 l11 -11 l-3 -3 l-11 11z" fill="#6a6a6a"/></svg>
<div class="a" style="left:1144px;top:177px;width:24px;height:6px;background:#ffff00;"></div>
<svg class="a" style="left:1173px;top:170px;" width="9" height="5" viewBox="0 0 9 5"><path d="M0 0 h9 l-4.5 5z" fill="#666"/></svg>
<div class="t" style="left:1188.20px;top:156.53px;font-size:23px;line-height:23px;color:#505050;transform:scaleX(1.5307);">A</div>
<div class="a" style="left:1188px;top:177px;width:24px;height:6px;background:#ff0000;"></div>
<svg class="a" style="left:1217px;top:170px;" width="9" height="5" viewBox="0 0 9 5"><path d="M0 0 h9 l-4.5 5z" fill="#666"/></svg>
<div class="t" style="left:1232.20px;top:162.31px;font-size:19px;line-height:19px;color:#505050;transform:scaleX(1.0483);">Aa</div>
<svg class="a" style="left:1259px;top:170px;" width="9" height="5" viewBox="0 0 9 5"><path d="M0 0 h9 l-4.5 5z" fill="#666"/></svg>
<div class="a" style="left:1276px;top:161px;width:1px;height:22px;background:#c6c6c6;"></div>
<div class="t" style="left:1287.00px;top:161.37px;font-size:22px;line-height:22px;color:#505050;transform:scaleX(1.0555);">A</div>
<svg class="a" style="left:1300px;top:161px;" width="7" height="4" viewBox="0 0 7 4"><path d="M0 4 h7 l-3.5 -4z" fill="#3a75c4"/></svg>
<div class="t" style="left:1318.20px;top:163.91px;font-size:19px;line-height:19px;color:#505050;transform:scaleX(1.0645);">A</div>
<svg class="a" style="left:1330px;top:161px;" width="7" height="4" viewBox="0 0 7 4"><path d="M0 0 h7 l-3.5 4z" fill="#3a75c4"/></svg>
<div class="t" style="left:1183.60px;top:198.30px;font-size:15px;line-height:15px;color:#5a5a5a;transform:scaleX(1.0152);">Шрифт</div>
<svg class="a" style="left:1330px;top:201px;" width="10" height="10" viewBox="0 0 10 10"><path d="M0.5 0.5 h8 M0.5 0.5 v8" stroke="#888" fill="none"/><path d="M3 3 l5.5 5.5 M8.5 4 v4.5 h-4.5" stroke="#888" fill="none"/></svg>
<div class="a" style="left:1351px;top:90px;width:44px;height:31px;background:#c6c6c6;"></div>
<div class="a" style="left:1355px;top:94.10000000000001px;width:5px;height:5px;border-radius:50%;background:#3a75c4;"></div>
<div class="a" style="left:1362px;top:96px;width:15px;height:1px;background:#505050;"></div>
<div class="a" style="left:1355px;top:102.2px;width:5px;height:5px;border-radius:50%;background:#3a75c4;"></div>
<div class="a" style="left:1362px;top:104px;width:15px;height:1px;background:#505050;"></div>
<div class="a" style="left:1355px;top:110.0px;width:5px;height:5px;border-radius:50%;background:#3a75c4;"></div>
<div class="a" style="left:1362px;top:112px;width:15px;height:1px;background:#505050;"></div>
<svg class="a" style="left:1383px;top:104px;" width="9" height="5" viewBox="0 0 9 5"><path d="M0 0 h9 l-4.5 5z" fill="#404040"/></svg>
<div class="t" style="left:1399.00px;top:93.13px;font-size:8px;line-height:8px;color:#3a75c4;">1</div>
<div class="a" style="left:1406px;top:96px;width:15px;height:1px;background:#505050;"></div>
<div class="t" style="left:1399.00px;top:101.23px;font-size:8px;line-height:8px;color:#3a75c4;">2</div>
<div class="a" style="left:1406px;top:104px;width:15px;height:1px;background:#505050;"></div>
<div class="t" style="left:1399.00px;top:109.03px;font-size:8px;line-height:8px;color:#3a75c4;">3</div>
<div class="a" style="left:1406px;top:112px;width:15px;height:1px;background:#505050;"></div>
<svg class="a" style="left:1427px;top:104px;" width="9" height="5" viewBox="0 0 9 5"><path d="M0 0 h9 l-4.5 5z" fill="#666"/></svg>
<div class="t" style="left:1442.00px;top:92.73px;font-size:8px;line-height:8px;color:#3a75c4;">1</div>
<div class="t" style="left:1449.00px;top:100.73px;font-size:8px;line-height:8px;color:#3a75c4;">a</div>
<div class="t" style="left:1454.00px;top:108.73px;font-size:8px;line-height:8px;color:#3a75c4;">i</div>
<div class="a" style="left:1449px;top:96px;width:16px;height:1px;background:#505050;"></div>
<div class="a" style="left:1455px;top:104px;width:10px;height:1px;background:#505050;"></div>
<div class="a" style="left:1459px;top:112px;width:6px;height:1px;background:#505050;"></div>
<svg class="a" style="left:1469px;top:104px;" width="9" height="5" viewBox="0 0 9 5"><path d="M0 0 h9 l-4.5 5z" fill="#666"/></svg>
<div class="a" style="left:1486px;top:95px;width:1px;height:22px;background:#c6c6c6;"></div>
<div class="a" style="left:1496px;top:94px;width:22px;height:1px;background:#505050;"></div>
<div class="a" style="left:1506px;top:99px;width:12px;height:1px;background:#505050;"></div>
<div class="a" style="left:1506px;top:104px;width:12px;height:1px;background:#505050;"></div>
<div class="a" style="left:1506px;top:109px;width:12px;height:1px;background:#505050;"></div>
<div class="a" style="left:1496px;top:114px;width:22px;height:1px;background:#505050;"></div>
<svg class="a" style="left:1496px;top:99px;" width="9" height="10" viewBox="0 0 9 10"><path d="M0 5 l4.5 -4.5 v3 h4.5 v3 h-4.5 v3z" fill="#3a75c4"/></svg>
<div class="a" style="left:1526px;top:94px;width:22px;height:1px;background:#505050;"></div>
<div class="a" style="left:1536px;top:99px;width:12px;height:1px;background:#505050;"></div>
<div class="a" style="left:1536px;top:104px;width:12px;height:1px;background:#505050;"></div>
<div class="a" style="left:1536px;top:109px;width:12px;height:1px;background:#505050;"></div>
<div class="a" style="left:1526px;top:114px;width:22px;height:1px;background:#505050;"></div>
<svg class="a" style="left:1526px;top:99px;" width="9" height="10" viewBox="0 0 9 10"><path d="M9 5 l-4.5 -4.5 v3 h-4.5 v3 h4.5 v3z" fill="#3a75c4"/></svg>
<div class="a" style="left:1356px;top:128px;width:20px;height:1px;background:#505050;"></div>
<div class="a" style="left:1356px;top:132px;width:16px;height:1px;background:#505050;"></div>
<div class="a" style="left:1356px;top:136px;width:20px;height:1px;background:#505050;"></div>
<div class="a" style="left:1356px;top:141px;width:16px;height:1px;background:#505050;"></div>
<div class="a" style="left:1356px;top:145px;width:20px;height:1px;background:#505050;"></div>
<div class="a" style="left:1356px;top:149px;width:16px;height:1px;background:#505050;"></div>
<div class="a" style="left:1386px;top:128px;width:20px;height:1px;background:#505050;"></div>
<div class="a" style="left:1388px;top:132px;width:16px;height:1px;background:#505050;"></div>
<div class="a" style="left:1386px;top:136px;width:20px;height:1px;background:#505050;"></div>
<div class="a" style="left:1388px;top:141px;width:16px;height:1px;background:#505050;"></div>
<div class="a" style="left:1386px;top:145px;width:20px;height:1px;background:#505050;"></div>
<div class="a" style="left:1388px;top:149px;width:16px;height:1px;background:#505050;"></div>
<div class="a" style="left:1416px;top:128px;width:20px;height:1px;background:#505050;"></div>
<div class="a" style="left:1420px;top:132px;width:16px;height:1px;background:#505050;"></div>
<div class="a" style="left:1416px;top:136px;width:20px;height:1px;background:#505050;"></div>
<div class="a" style="left:1420px;top:141px;width:16px;height:1px;background:#505050;"></div>
<div class="a" style="left:1416px;top:145px;width:20px;height:1px;background:#505050;"></div>
<div class="a" style="left:1420px;top:149px;width:16px;height:1px;background:#505050;"></div>
<div class="a" style="left:1441px;top:124px;width:30px;height:30.5px;background:#c6c6c6;"></div>
<div class="a" style="left:1446px;top:128px;width:20px;height:1px;background:#505050;"></div>
<div class="a" style="left:1446px;top:132px;width:20px;height:1px;background:#505050;"></div>
<div class="a" style="left:1446px;top:136px;width:20px;height:1px;background:#505050;"></div>
<div class="a" style="left:1446px;top:141px;width:20px;height:1px;background:#505050;"></div>
<div class="a" style="left:1446px;top:145px;width:20px;height:1px;background:#505050;"></div>
<div class="a" style="left:1446px;top:149px;width:20px;height:1px;background:#505050;"></div>
<div class="a" style="left:1475px;top:129px;width:1px;height:20px;background:#c6c6c6;"></div>
<svg class="a" style="left:1484px;top:127px;" width="24" height="24" viewBox="0 0 24 24"><path d="M4.5 2 v20" stroke="#3a75c4" stroke-width="1.8"/><path d="M0.5 6 l4 -4.5 l4 4.5 M0.5 18 l4 4.5 l4 -4.5" fill="none" stroke="#3a75c4" stroke-width="1.8"/><path d="M10 4 h12 M10 8.5 h9 M10 13 h12 M10 17.5 h9" stroke="#505050" stroke-width="1.3"/></svg>
<svg class="a" style="left:1511px;top:137px;" width="9" height="5" viewBox="0 0 9 5"><path d="M0 0 h9 l-4.5 5z" fill="#666"/></svg>
<svg class="a" style="left:1354px;top:160px;" width="24" height="24" viewBox="0 0 24 24"><rect x="0.5" y="18.5" width="23" height="5" fill="#fff" stroke="#808080"/><path d="M4 11 l7 -7 l7 7 l-7 7z" fill="#fff" stroke="#606060" stroke-width="1.2"/><path d="M11 1 v6" stroke="#606060"/><path d="M18 11 q3 3 2 7" fill="none" stroke="#3a75c4" stroke-width="2"/></svg>
<svg class="a" style="left:1383px;top:170px;" width="9" height="5" viewBox="0 0 9 5"><path d="M0 0 h9 l-4.5 5z" fill="#666"/></svg>
<svg class="a" style="left:1399px;top:161px;" width="22" height="21" viewBox="0 0 22 21"><rect x="0.5" y="0.5" width="20" height="19" fill="#fff" stroke="#888" stroke-dasharray="1 1"/><path d="M10.5 0.5 v19 M0.5 10 h20" stroke="#888" stroke-dasharray="1 1"/><path d="M0 20 h21" stroke="#606060" stroke-width="1.3"/></svg>
<svg class="a" style="left:1427px;top:170px;" width="9" height="5" viewBox="0 0 9 5"><path d="M0 0 h9 l-4.5 5z" fill="#666"/></svg>
<div class="a" style="left:1443px;top:161px;width:1px;height:22px;background:#c6c6c6;"></div>
<div class="t" style="left:1455.60px;top:162.69px;font-size:11px;line-height:11px;color:#3a75c4;font-weight:bold;">A</div>
<div class="t" style="left:1455.60px;top:173.19px;font-size:11px;line-height:11px;color:#8a4aae;font-weight:bold;">Я</div>
<svg class="a" style="left:1464px;top:161px;" width="10" height="22" viewBox="0 0 10 22"><path d="M5 1 v19 M1 15 l4 5 l4 -5" fill="none" stroke="#505050" stroke-width="1.5"/></svg>
<div class="a" style="left:1483px;top:161px;width:1px;height:22px;background:#c6c6c6;"></div>
<div class="t" style="left:1495.00px;top:162.53px;font-size:23px;line-height:23px;color:#404040;font-weight:bold;transform:scaleX(1.2534);">¶</div>
<div class="t" style="left:1419.00px;top:198.30px;font-size:15px;line-height:15px;color:#5a5a5a;">Абзац</div>
<svg class="a" style="left:1540px;top:201px;" width="10" height="10" viewBox="0 0 10 10"><path d="M0.5 0.5 h8 M0.5 0.5 v8" stroke="#888" fill="none"/><path d="M3 3 l5.5 5.5 M8.5 4 v4.5 h-4.5" stroke="#888" fill="none"/></svg>
<svg class="a" style="left:1572px;top:93px;" width="46" height="44" viewBox="0 0 46 44"><path d="M1 42 L14.5 2 h6 L34 42 h-6.5 l-3.8 -11.5 h-12.4 l-3.8 11.5z M13 25 h9 l-4.5 -14z" fill="#3a75c4"/><path d="M44 10 l-12 14 l-5 -4 l12 -14 q3 -3 5 -1z" fill="#7a7a7a"/><path d="M26 21 q6 0 5 6 q-3 8 -13 10 q4 -5 3 -10 q1 -6 5 -6z" fill="#3a75c4"/><ellipse cx="26" cy="26" rx="3.5" ry="2.5" fill="#fff" transform="rotate(-40 26 26)"/></svg>
<div class="t" style="left:1569.70px;top:145.76px;font-size:18px;line-height:18px;color:#444;transform:scaleX(0.8796);">Стили</div>
<svg class="a" style="left:1588px;top:176px;" width="9" height="5" viewBox="0 0 9 5"><path d="M0 0 h9 l-4.5 5z" fill="#666"/></svg>
<div class="t" style="left:1560.30px;top:198.30px;font-size:15px;line-height:15px;color:#5a5a5a;transform:scaleX(0.9769);">Стили</div>
<svg class="a" style="left:1613px;top:201px;" width="10" height="10" viewBox="0 0 10 10"><path d="M0.5 0.5 h8 M0.5 0.5 v8" stroke="#888" fill="none"/><path d="M3 3 l5.5 5.5 M8.5 4 v4.5 h-4.5" stroke="#888" fill="none"/></svg>
<div class="a" style="left:1676px;top:90px;width:46px;height:46px;background:#fafafa;border:1px solid #d5d5d5;"></div>
<svg class="a" style="left:1690px;top:103px;" width="20" height="20" viewBox="0 0 20 20"><circle cx="12" cy="7.5" r="6" fill="none" stroke="#3a75c4" stroke-width="2"/><path d="M7.5 12 L1.5 18" stroke="#3a75c4" stroke-width="2.6" stroke-linecap="round"/></svg>
<div class="t" style="left:1633.80px;top:143.76px;font-size:18px;line-height:18px;color:#444;transform:scaleX(0.9714);">Редактирование</div>
<svg class="a" style="left:1696px;top:173px;" width="9" height="5" viewBox="0 0 9 5"><path d="M0 0 h9 l-4.5 5z" fill="#666"/></svg>
<svg class="a" style="left:1894px;top:200px;" width="14" height="9" viewBox="0 0 14 9"><path d="M1.5 7.5 L7 2 L12.5 7.5" fill="none" stroke="#707070" stroke-width="2"/></svg>
<div class="a" style="left:961px;top:218px;width:932px;height:802px;background:#fff;"></div>
<div class="a" style="left:1893px;top:218px;width:26px;height:829px;background:#e6e6e6;"></div>
<div class="a" style="left:961px;top:1020px;width:932px;height:27px;background:#e6e6e6;"></div>
<div class="a" style="left:1919px;top:0px;width:1px;height:1080px;background:#8a8680;"></div>
<div class="a" style="left:961px;top:0px;width:959px;height:1px;background:#8a8680;"></div>
<div class="a" style="left:961px;top:218px;width:10px;height:802px;background:linear-gradient(90deg,rgba(0,0,0,0.10),rgba(0,0,0,0));"></div>
<div class="a" style="left:0;top:0;width:1920px;height:1080px;clip-path:inset(218px 27px 60px 961px);">
<div class="a" style="left:1010px;top:265px;width:883px;height:1px;background:#000;"></div>
<div class="a" style="left:1010px;top:326px;width:883px;height:1px;background:#000;"></div>
<div class="a" style="left:1010px;top:447px;width:883px;height:1px;background:#000;"></div>
<div class="a" style="left:1010px;top:597px;width:883px;height:1px;background:#000;"></div>
<div class="a" style="left:1010px;top:748px;width:883px;height:1px;background:#000;"></div>
<div class="a" style="left:1010px;top:200px;width:1px;height:549px;background:#000;"></div>
<div class="a" style="left:1297px;top:200px;width:1px;height:549px;background:#000;"></div>
<div class="a" style="left:1510px;top:200px;width:1px;height:549px;background:#000;"></div>
<div class="a" style="left:1672px;top:200px;width:1px;height:549px;background:#000;"></div>
<div class="t" style="left:1020.00px;top:205.99px;font-size:26px;line-height:26px;">Лакокрасочные</div>
<div class="t" style="left:1020.00px;top:235.99px;font-size:26px;line-height:26px;">работы</div>
<div class="t" style="left:1370.91px;top:206.89px;font-size:26px;line-height:26px;">Фикс.</div>
<div class="t" style="left:1321.90px;top:235.79px;font-size:26px;line-height:26px;">трудозатраты</div>
<div class="t" style="left:1569.32px;top:221.69px;font-size:26px;line-height:26px;">200</div>
<div class="t" style="left:1693.40px;top:220.99px;font-size:26px;line-height:26px;">Бригада 3 – 800%</div>
<div class="t" style="left:1021.50px;top:282.99px;font-size:26px;line-height:26px;">Отделочные работы</div>
<div class="t" style="left:1370.91px;top:267.59px;font-size:26px;line-height:26px;">Фикс.</div>
<div class="t" style="left:1321.90px;top:297.59px;font-size:26px;line-height:26px;">трудозатраты</div>
<div class="t" style="left:1563.08px;top:282.74px;font-size:26px;line-height:26px;">1000</div>
<div class="t" style="left:1693.40px;top:281.99px;font-size:26px;line-height:26px;">Бригада 3 – 800%</div>
<div class="t" style="left:1022.60px;top:358.69px;font-size:26px;line-height:26px;font-weight:bold;">ПРИЕМОСДАТОЧ-</div>
<div class="t" style="left:1022.60px;top:388.99px;font-size:26px;line-height:26px;font-weight:bold;">НЫЕ РАБОТЫ</div>
<div class="t" style="left:1339.49px;top:387.99px;font-size:26px;line-height:26px;">Составная</div>
<div class="t" style="left:1693.40px;top:327.99px;font-size:26px;line-height:26px;">Управляющий –100%</div>
<div class="t" style="left:1693.40px;top:357.59px;font-size:26px;line-height:26px;">Зам. Управл. – 100%</div>
<div class="t" style="left:1693.40px;top:387.49px;font-size:26px;line-height:26px;">Гл. Бухгалтер – 100%</div>
<div class="t" style="left:1693.40px;top:416.99px;font-size:26px;line-height:26px;">Гл. Инженер – 100%</div>
<svg class="a" style="left:1755px;top:382px;" width="91" height="5" viewBox="0 0 91 5"><path d="M0 2.5 L1.5 0.5 L4.5 4 L7.5 0.5 L10.5 4 L13.5 0.5 L16.5 4 L19.5 0.5 L22.5 4 L25.5 0.5 L28.5 4 L31.5 0.5 L34.5 4 L37.5 0.5 L40.5 4 L43.5 0.5 L46.5 4 L49.5 0.5 L52.5 4 L55.5 0.5 L58.5 4 L61.5 0.5 L64.5 4 L67.5 0.5 L70.5 4 L73.5 0.5 L76.5 4 L79.5 0.5 L82.5 4 L85.5 0.5 L88.5 4 L91.5 0.5" fill="none" stroke="#e02020" stroke-width="1"/></svg>
<div class="t" style="left:1021.20px;top:479.59px;font-size:26px;line-height:26px;">Приемка</div>
<div class="t" style="left:1021.20px;top:509.89px;font-size:26px;line-height:26px;">представителями</div>
<div class="t" style="left:1021.20px;top:539.49px;font-size:26px;line-height:26px;">фирмы</div>
<div class="t" style="left:1370.91px;top:449.49px;font-size:26px;line-height:26px;">Фикс.</div>
<div class="t" style="left:1317.36px;top:479.49px;font-size:26px;line-height:26px;">длительность,</div>
<div class="t" style="left:1320.02px;top:509.49px;font-size:26px;line-height:26px;">снять флажок</div>
<div class="t" style="left:1307.41px;top:539.49px;font-size:26px;line-height:26px;font-style:italic;">Фиксированный</div>
<div class="t" style="left:1322.36px;top:569.49px;font-size:26px;line-height:26px;font-style:italic;">объем работ</div>
<div class="t" style="left:1370.91px;top:599.99px;font-size:26px;line-height:26px;">Фикс.</div>
<div class="t" style="left:1317.36px;top:629.99px;font-size:26px;line-height:26px;">длительность,</div>
<div class="t" style="left:1320.02px;top:659.99px;font-size:26px;line-height:26px;">снять флажок</div>
<div class="t" style="left:1307.41px;top:689.99px;font-size:26px;line-height:26px;font-style:italic;">Фиксированный</div>
<div class="t" style="left:1322.36px;top:719.99px;font-size:26px;line-height:26px;font-style:italic;">объем работ</div>
<div class="t" style="left:1693.20px;top:493.59px;font-size:26px;line-height:26px;">Инженер – 100%</div>
<div class="t" style="left:1693.20px;top:523.99px;font-size:26px;line-height:26px;">Дизайнер – 100%</div>
<div class="t" style="left:1021.20px;top:629.89px;font-size:26px;line-height:26px;">Приемка</div>
<div class="t" style="left:1021.20px;top:660.39px;font-size:26px;line-height:26px;">представителями</div>
<div class="t" style="left:1021.20px;top:689.49px;font-size:26px;line-height:26px;">заказчика</div>
<div class="t" style="left:1693.20px;top:658.59px;font-size:26px;line-height:26px;">Дизайнер – 100%</div>
</div>
<div class="a" style="left:961px;top:1046px;width:958px;height:1px;background:#c6c6c6;"></div>
<div class="a" style="left:961px;top:1047px;width:958px;height:31px;background:#f1f1f1;"></div>
<div class="t" style="left:969.00px;top:1055.62px;font-size:15.8px;line-height:15.8px;color:#555;transform:scaleX(0.9727);">Страница 9 из 10</div>
<div class="t" style="left:1114.50px;top:1055.62px;font-size:15.8px;line-height:15.8px;color:#555;transform:scaleX(0.9493);">Число слов: 1315</div>
<svg class="a" style="left:1260px;top:1053px;" width="22" height="18" viewBox="0 0 22 18"><path d="M1 1 h8 l2 2 v14 l-2 -1 h-8z M11 3 l2 -2 h7" fill="none" stroke="#707070" stroke-width="1.3"/><path d="M14 6 l5 5 M19 6 l-5 5" stroke="#505050" stroke-width="2"/></svg>
<div class="t" style="left:1299.50px;top:1055.62px;font-size:15.8px;line-height:15.8px;color:#555;transform:scaleX(0.9880);">русский</div>
<svg class="a" style="left:1377px;top:1052px;" width="21" height="19" viewBox="0 0 21 19"><circle cx="4.5" cy="4.5" r="4" fill="#707070"/><rect x="4" y="5" width="16" height="13" fill="#fff" stroke="#707070"/><path d="M6 9 h12 M6 12 h12 M6 15 h12 M10 7 v10 M14 7 v10" stroke="#909090" stroke-width="0.8"/></svg>
<svg class="a" style="left:1525px;top:1053px;" width="20" height="18" viewBox="0 0 20 18"><path d="M0.5 1 h8 l1.5 1 l1.5 -1 h8 v15 h-8 l-1.5 1 l-1.5 -1 h-8z" fill="#fff" stroke="#707070"/><path d="M2.5 5h5 M2.5 8h5 M2.5 11h5 M12.5 5h5 M12.5 8h5 M12.5 11h5 M10 2 v15" stroke="#707070"/></svg>
<div class="a" style="left:1557px;top:1047px;width:45px;height:30px;background:#c6c6c6;"></div>
<svg class="a" style="left:1570px;top:1053px;" width="20" height="18" viewBox="0 0 20 18"><rect x="0.5" y="0.5" width="19" height="17" fill="#fff" stroke="#707070"/><path d="M3.5 4h13 M3.5 7h13 M3.5 10h13 M3.5 13h13" stroke="#707070"/></svg>
<svg class="a" style="left:1615px;top:1052px;" width="22" height="20" viewBox="0 0 22 20"><rect x="0.5" y="0.5" width="17" height="15" fill="#fff" stroke="#707070"/><path d="M3 4h10 M3 7h8 M3 10h6" stroke="#707070"/><circle cx="15.5" cy="14.5" r="5.5" fill="#606060"/></svg>
<div class="a" style="left:1652px;top:1061px;width:12px;height:2.2px;background:#606060;"></div>
<div class="a" style="left:1669px;top:1062px;width:150px;height:1px;background:#a0a0a0;"></div>
<div class="a" style="left:1741px;top:1054.5px;width:6px;height:16px;background:#606060;"></div>
<div class="a" style="left:1824px;top:1061px;width:13.5px;height:2.2px;background:#606060;"></div>
<div class="a" style="left:1829.6px;top:1055px;width:2.2px;height:13.5px;background:#606060;"></div>
<div class="t" style="left:1856.25px;top:1055.62px;font-size:15.8px;line-height:15.8px;color:#555;transform:scaleX(0.9466);">100%</div>
<div class="a" style="left:961px;top:1077px;width:959px;height:3px;background:#1e1e1e;"></div>
<div class="a" style="left:2px;top:281px;width:1022px;height:559px;box-shadow:3px 4px 14px rgba(0,0,0,0.34);"></div>
<div class="a" style="left:2px;top:281px;width:1022px;height:559px;background:#f0f0f0;border:1px solid #7a7a7a;"></div>
<div class="a" style="left:3px;top:282px;width:1020px;height:36px;background:#fff;"></div>
<div class="t" style="left:6.00px;top:292.26px;font-size:18px;line-height:18px;color:#000;transform:scaleX(0.9624);">Сведения о задаче</div>
<svg class="a" style="left:991px;top:292px;" width="16" height="16" viewBox="0 0 16 16"><path d="M0.5 0.5 L15.5 15.5 M15.5 0.5 L0.5 15.5" stroke="#000" stroke-width="1.1"/></svg>
<div class="a" style="left:8px;top:325px;width:201px;height:26px;background:#f0f0f0;border-top:1px solid #fff;border-left:1px solid #fff;border-radius:2px 2px 0 0;"></div>
<div class="a" style="left:208px;top:325px;width:1.5px;height:52px;background:#000;"></div>
<div class="t" style="left:31.80px;top:332.65px;font-size:16px;line-height:16px;color:#000;transform:scaleX(0.9582);">Настраиваемые поля</div>
<div class="a" style="left:8px;top:350px;width:200px;height:27px;border-top:1px solid #fff;border-left:1px solid #fff;"></div>
<div class="t" style="left:83.30px;top:357.05px;font-size:16px;line-height:16px;transform:scaleX(0.9639);">Общие</div>
<div class="a" style="left:210px;top:350px;width:202px;height:27px;border-top:1px solid #fff;"></div>
<div class="a" style="left:411px;top:351px;width:1.5px;height:26px;background:#000;"></div>
<div class="t" style="left:245.00px;top:357.15px;font-size:16px;line-height:16px;transform:scaleX(0.9680);">Предшественники</div>
<div class="a" style="left:413px;top:350px;width:200px;height:27px;border-top:1px solid #fff;border-right:1px solid #fff;"></div>
<div class="t" style="left:483.30px;top:357.15px;font-size:16px;line-height:16px;transform:scaleX(0.9337);">Ресурсы</div>
<div class="a" style="left:612px;top:348.5px;width:205px;height:30px;background:#f0f0f0;border-top:1px solid #fff;border-left:1px solid #fff;"></div>
<div class="a" style="left:816px;top:349.5px;width:1.5px;height:28px;background:#000;"></div>
<div class="t" style="left:657.20px;top:356.15px;font-size:16px;line-height:16px;">Дополнительно</div>
<div class="a" style="left:818px;top:351px;width:200px;height:26px;border-top:1px solid #fff;"></div>
<div class="a" style="left:1016.5px;top:351px;width:1.5px;height:26px;background:#000;"></div>
<div class="t" style="left:887.00px;top:356.95px;font-size:16px;line-height:16px;transform:scaleX(0.9706);">Заметки</div>
<div class="a" style="left:7px;top:377px;width:1013px;height:456px;border-left:1px solid #fff;border-top:1px solid #fff;border-right:2px solid #000;border-bottom:2px solid #000;"></div>
<div class="a" style="left:613px;top:377px;width:203px;height:1px;background:#f0f0f0;"></div>
<div class="t" style="left:16.00px;top:397.35px;font-size:16px;line-height:16px;transform:scaleX(0.9571);"><u>Н</u>азвание:</div>
<div class="a" style="left:102px;top:389px;width:534px;height:28px;background:#fff;border:1px solid #7a7a7a;"></div>
<div class="t" style="left:106.30px;top:393.85px;font-size:16px;line-height:16px;transform:scaleX(0.9775);">Приемка представителями заказчика</div>
<div class="t" style="left:649.20px;top:397.15px;font-size:16px;line-height:16px;transform:scaleX(0.9939);"><u>Д</u>лительность:</div>
<div class="a" style="left:770px;top:389px;width:89px;height:28px;background:#fff;border:1px solid #7a7a7a;"></div>
<div class="t" style="left:774.00px;top:393.25px;font-size:16px;line-height:16px;transform:scaleX(1.0417);">2д</div>
<div class="a" style="left:833px;top:391px;width:24px;height:12px;background:#e8e8e8;border:1px solid #d0d0d0;"></div>
<div class="a" style="left:833px;top:403px;width:24px;height:12px;background:#e8e8e8;border:1px solid #d0d0d0;"></div>
<svg class="a" style="left:839px;top:393px;" width="12" height="7" viewBox="0 0 12 7"><path d="M0 6 h11 l-5.5 -5.5z" fill="#000"/></svg>
<svg class="a" style="left:839px;top:406px;" width="12" height="7" viewBox="0 0 12 7"><path d="M0 0 h11 l-5.5 5.5z" fill="#000"/></svg>
<div class="a" style="left:872px;top:393px;width:20px;height:20px;background:#fff;border:1px solid #333;"></div>
<div class="t" style="left:896.00px;top:395.75px;font-size:16px;line-height:16px;transform:scaleX(0.9818);"><u>П</u>редв. оценка</div>
<div class="t" style="left:19.60px;top:425.45px;font-size:16px;line-height:16px;transform:scaleX(0.9792);">Ограничение задачи</div>
<div class="a" style="left:174px;top:432px;width:831px;height:1px;background:#dcdcdc;"></div>
<div class="t" style="left:28.10px;top:462.15px;font-size:16px;line-height:16px;transform:scaleX(1.0082);">Кра<u>й</u>ний срок:</div>
<div class="a" style="left:201px;top:454.6px;width:503px;height:27px;background:#fff;border:1px solid #7a7a7a;"></div>
<div class="a" style="left:682px;top:455.6px;width:21px;height:25px;background:#e5e5e5;border-left:1px solid #c8c8c8;"></div>
<svg class="a" style="left:687px;top:465.1px;" width="11" height="6" viewBox="0 0 11 6"><path d="M0.5 0.5 L5.5 5.5 L10.5 0.5" fill="none" stroke="#404040" stroke-width="1"/></svg>
<div class="t" style="left:205.30px;top:460.95px;font-size:16px;line-height:16px;transform:scaleX(0.9821);">НД</div>
<div class="a" style="left:28px;top:490px;width:965px;height:1px;background:#dcdcdc;"></div>
<div class="t" style="left:28.00px;top:527.35px;font-size:16px;line-height:16px;transform:scaleX(1.0165);"><u>Т</u>ип ограничения:</div>
<div class="a" style="left:201px;top:521.3px;width:351px;height:23.2px;background:#fff;border:1px solid #7a7a7a;"></div>
<div class="a" style="left:530px;top:522.3px;width:21px;height:21.2px;background:#e5e5e5;border-left:1px solid #c8c8c8;"></div>
<svg class="a" style="left:535px;top:529.9px;" width="11" height="6" viewBox="0 0 11 6"><path d="M0.5 0.5 L5.5 5.5 L10.5 0.5" fill="none" stroke="#404040" stroke-width="1"/></svg>
<div class="t" style="left:205.30px;top:526.05px;font-size:16px;line-height:16px;transform:scaleX(0.9960);">Как можно раньше</div>
<div class="t" style="left:565.60px;top:527.15px;font-size:16px;line-height:16px;">Дата о<u>г</u>раничения:</div>
<div class="a" style="left:717px;top:519.4px;width:275px;height:27px;background:#fff;border:1px solid #7a7a7a;"></div>
<div class="a" style="left:970px;top:520.4px;width:21px;height:25px;background:#e5e5e5;border-left:1px solid #c8c8c8;"></div>
<svg class="a" style="left:975px;top:529.9px;" width="11" height="6" viewBox="0 0 11 6"><path d="M0.5 0.5 L5.5 5.5 L10.5 0.5" fill="none" stroke="#404040" stroke-width="1"/></svg>
<div class="t" style="left:721.30px;top:525.15px;font-size:16px;line-height:16px;transform:scaleX(0.9821);">НД</div>
<div class="a" style="left:16px;top:563px;width:989px;height:1px;background:#dcdcdc;"></div>
<div class="t" style="left:28.30px;top:581.45px;font-size:16px;line-height:16px;transform:scaleX(1.0085);">Тип зад<u>а</u>чи:</div>
<div class="a" style="left:201px;top:575.6px;width:351px;height:23px;background:#fff;border:1px solid #7a7a7a;"></div>
<div class="a" style="left:530px;top:576.6px;width:21px;height:21px;background:#e5e5e5;border-left:1px solid #c8c8c8;"></div>
<svg class="a" style="left:535px;top:584.1px;" width="11" height="6" viewBox="0 0 11 6"><path d="M0.5 0.5 L5.5 5.5 L10.5 0.5" fill="none" stroke="#404040" stroke-width="1"/></svg>
<div class="t" style="left:205.20px;top:580.45px;font-size:16px;line-height:16px;transform:scaleX(0.9874);">Фикс. длительность</div>
<div class="t" style="left:28.00px;top:610.95px;font-size:16px;line-height:16px;transform:scaleX(0.9742);"><u>К</u>алендарь:</div>
<div class="a" style="left:201px;top:605.5px;width:351px;height:23px;background:#fff;border:1px solid #7a7a7a;"></div>
<div class="a" style="left:530px;top:606.5px;width:21px;height:21px;background:#e5e5e5;border-left:1px solid #c8c8c8;"></div>
<svg class="a" style="left:535px;top:614.0px;" width="11" height="6" viewBox="0 0 11 6"><path d="M0.5 0.5 L5.5 5.5 L10.5 0.5" fill="none" stroke="#404040" stroke-width="1"/></svg>
<div class="t" style="left:205.20px;top:610.65px;font-size:16px;line-height:16px;transform:scaleX(0.9545);">Нет</div>
<div class="t" style="left:28.00px;top:643.15px;font-size:16px;line-height:16px;transform:scaleX(0.9936);">Код СД<u>Р</u>:</div>
<div class="a" style="left:201px;top:635.5px;width:351px;height:27px;background:#fff;border:1px solid #7a7a7a;"></div>
<div class="t" style="left:205.20px;top:639.25px;font-size:16px;line-height:16px;transform:scaleX(1.0112);">1.4.2</div>
<div class="t" style="left:28.00px;top:675.25px;font-size:16px;line-height:16px;transform:scaleX(0.9809);">Спосо<u>б</u> расчета освоенного объема:</div>
<div class="a" style="left:308.3px;top:669.4px;width:243.7px;height:23px;background:#fff;border:1px solid #7a7a7a;"></div>
<div class="a" style="left:530.0px;top:670.4px;width:21px;height:21px;background:#e5e5e5;border-left:1px solid #c8c8c8;"></div>
<svg class="a" style="left:535.0px;top:677.9px;" width="11" height="6" viewBox="0 0 11 6"><path d="M0.5 0.5 L5.5 5.5 L10.5 0.5" fill="none" stroke="#404040" stroke-width="1"/></svg>
<div class="t" style="left:312.50px;top:674.95px;font-size:16px;line-height:16px;transform:scaleX(0.9725);">% завершения</div>
<div class="a" style="left:565px;top:577px;width:20px;height:20px;background:#fff;border:1px solid #333;"></div>
<div class="t" style="left:588.70px;top:580.45px;font-size:16px;line-height:16px;transform:scaleX(0.9912);"><u>Ф</u>иксированный объем работ</div>
<div class="a" style="left:587px;top:576px;width:218px;height:21px;border:1px dotted #000;"></div>
<div class="a" style="left:565px;top:607px;width:20px;height:20px;background:#fff;border:1px solid #cccccc;"></div>
<div class="t" style="left:589.00px;top:610.45px;font-size:16px;line-height:16px;color:#7d7d7d;transform:scaleX(0.9857);">Не учит<u>ы</u>вать календари ресурсов при планировании</div>
<div class="a" style="left:16.3px;top:711.2px;width:20px;height:20px;background:#fff;border:1px solid #333;"></div>
<div class="t" style="left:40.30px;top:713.75px;font-size:16px;line-height:16px;transform:scaleX(0.9922);">По<u>м</u>етить задачу как веху</div>
<div class="a" style="left:17.3px;top:792.3px;width:97.5px;height:30.2px;background:#e1e1e1;border:1px solid #adadad;"></div>
<div class="t" style="left:36.30px;top:801.25px;font-size:16px;line-height:16px;transform:scaleX(0.9443);"><u>С</u>правка</div>
<div class="a" style="left:794px;top:792px;width:98px;height:31px;background:#e1e1e1;border:2px solid #0078d7;"></div>
<div class="t" style="left:832.50px;top:801.45px;font-size:16px;line-height:16px;transform:scaleX(0.9789);">ОК</div>
<div class="a" style="left:906px;top:792px;width:98px;height:31px;background:#e1e1e1;border:1px solid #adadad;"></div>
<div class="t" style="left:927.60px;top:801.45px;font-size:16px;line-height:16px;transform:scaleX(0.9436);">Отмена</div>
</body></html>
